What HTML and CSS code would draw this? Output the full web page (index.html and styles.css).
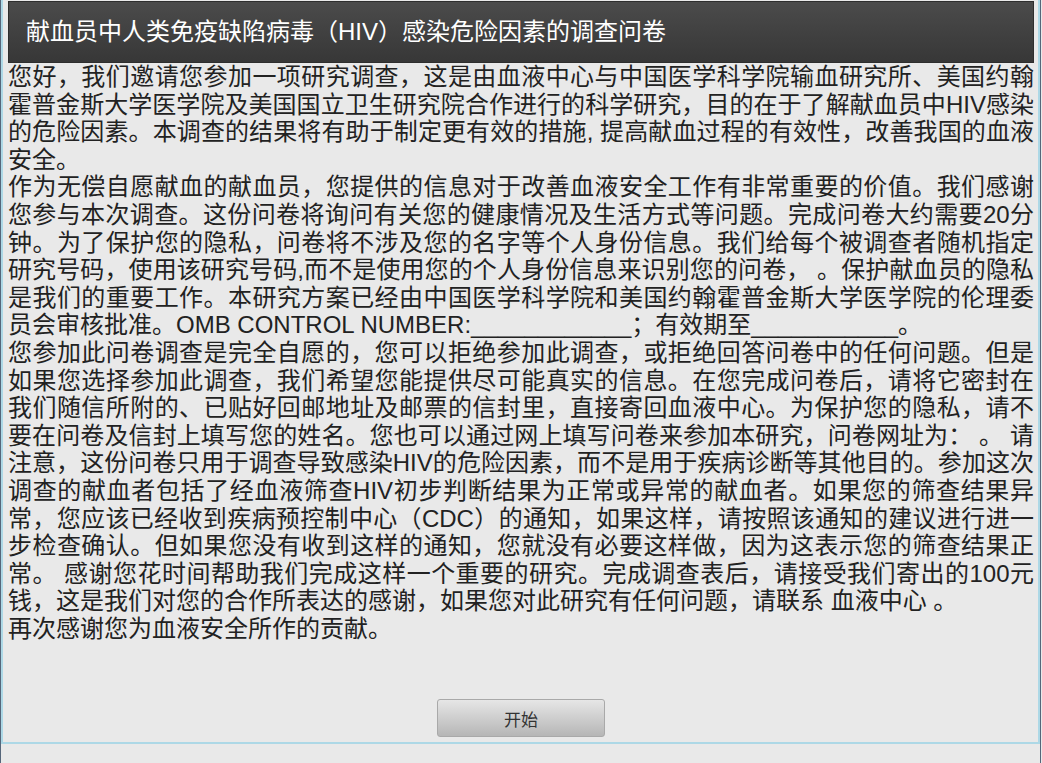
FILE: index.html
```html
<!DOCTYPE html>
<html lang="zh-CN">
  <head>
    <meta charset="utf-8">
    <title>献血员中人类免疫缺陷病毒（HIV）感染危险因素的调查问卷</title>
    <link rel="stylesheet" href="styles.css">
  </head>
  <body>
    <div class="frame">
      <div class="panel">
        <header class="title-bar">
          <h1>献血员中人类免疫缺陷病毒（HIV）感染危险因素的调查问卷</h1>
        </header>
        <main class="intro">
          <p>您好，我们邀请您参加一项研究调查，这是由血液中心与中国医学科学院输血研究所、美国约翰霍普金斯大学医学院及美国国立卫生研究院合作进行的科学研究，目的在于了解献血员中HIV感染的危险因素。本调查的结果将有助于制定更有效的措施, 提高献血过程的有效性，改善我国的血液安全。</p>
          <p>作为无偿自愿献血的献血员，您提供的信息对于改善血液安全工作有非常重要的价值。我们感谢您参与本次调查。这份问卷将询问有关您的健康情况及生活方式等问题。完成问卷大约需要20分钟。为了保护您的隐私，问卷将不涉及您的名字等个人身份信息。我们给每个被调查者随机指定研究号码，使用该研究号码,而不是使用您的个人身份信息来识别您的问卷， 。保护献血员的隐私是我们的重要工作。本研究方案已经由中国医学科学院和美国约翰霍普金斯大学医学院的伦理委员会审核批准。OMB CONTROL NUMBER:____________；有效期至___________。</p>
          <p>您参加此问卷调查是完全自愿的，您可以拒绝参加此调查，或拒绝回答问卷中的任何问题。但是如果您选择参加此调查，我们希望您能提供尽可能真实的信息。在您完成问卷后，请将它密封在我们随信所附的、已贴好回邮地址及邮票的信封里，直接寄回血液中心。为保护您的隐私，请不要在问卷及信封上填写您的姓名。您也可以通过网上填写问卷来参加本研究，问卷网址为： 。 请注意，这份问卷只用于调查导致感染HIV的危险因素，而不是用于疾病诊断等其他目的。参加这次调查的献血者包括了经血液筛查HIV初步判断结果为正常或异常的献血者。如果您的筛查结果异常，您应该已经收到疾病预控制中心（CDC）的通知，如果这样，请按照该通知的建议进行进一步检查确认。但如果您没有收到这样的通知，您就没有必要这样做，因为这表示您的筛查结果正常。 感谢您花时间帮助我们完成这样一个重要的研究。完成调查表后，请接受我们寄出的100元钱，这是我们对您的合作所表达的感谢，如果您对此研究有任何问题，请联系 血液中心 。</p>
          <p>再次感谢您为血液安全所作的贡献。</p>
        </main>
        <div class="actions">
          <button type="button" class="start-btn">开始</button>
        </div>
      </div>
    </div>
  </body>
</html>
```

FILE: styles.css
```css
html,
body {
  margin: 0;
  padding: 0;
  height: 100%;
}

body {
  background: #E9E9E9;
  color: #222222;
  font-family: "Liberation Sans", "Noto Sans CJK SC", sans-serif;
  font-size: 24px;
}

.frame {
  width: 1039px;
  min-height: 100%;
  border-left: 1px solid #56667A;
  border-right: 1px solid #56667A;
}

.panel {
  display: flex;
  flex-direction: column;
  box-sizing: border-box;
  height: 744px;
  padding: 1px 4px 0 5px;
  border: 2px solid #ADD8E6;
  border-top: none;
}

.title-bar {
  height: 60px;
  border: 1px solid #2E2E2E;
  background: linear-gradient(#4B4B4B, #373737);
}

.title-bar h1 {
  margin: 0;
  padding-left: 17px;
  color: #FFFFFF;
  font-size: 24px;
  font-weight: normal;
  line-height: 60px;
}

.intro {
  flex: 1;
}

.intro p {
  margin: 0;
  line-height: 1.15;
  text-align: justify;
}

.actions {
  display: flex;
  justify-content: center;
  padding-bottom: 5px;
}

.start-btn {
  width: 168px;
  height: 38px;
  border: 1px solid #A9A9A9;
  border-radius: 3px;
  background: linear-gradient(#E6E6E6, #B6B6B6);
  color: #333333;
  font-family: "Liberation Sans", "Noto Sans CJK SC", sans-serif;
  font-size: 17px;
  cursor: pointer;
}
```
